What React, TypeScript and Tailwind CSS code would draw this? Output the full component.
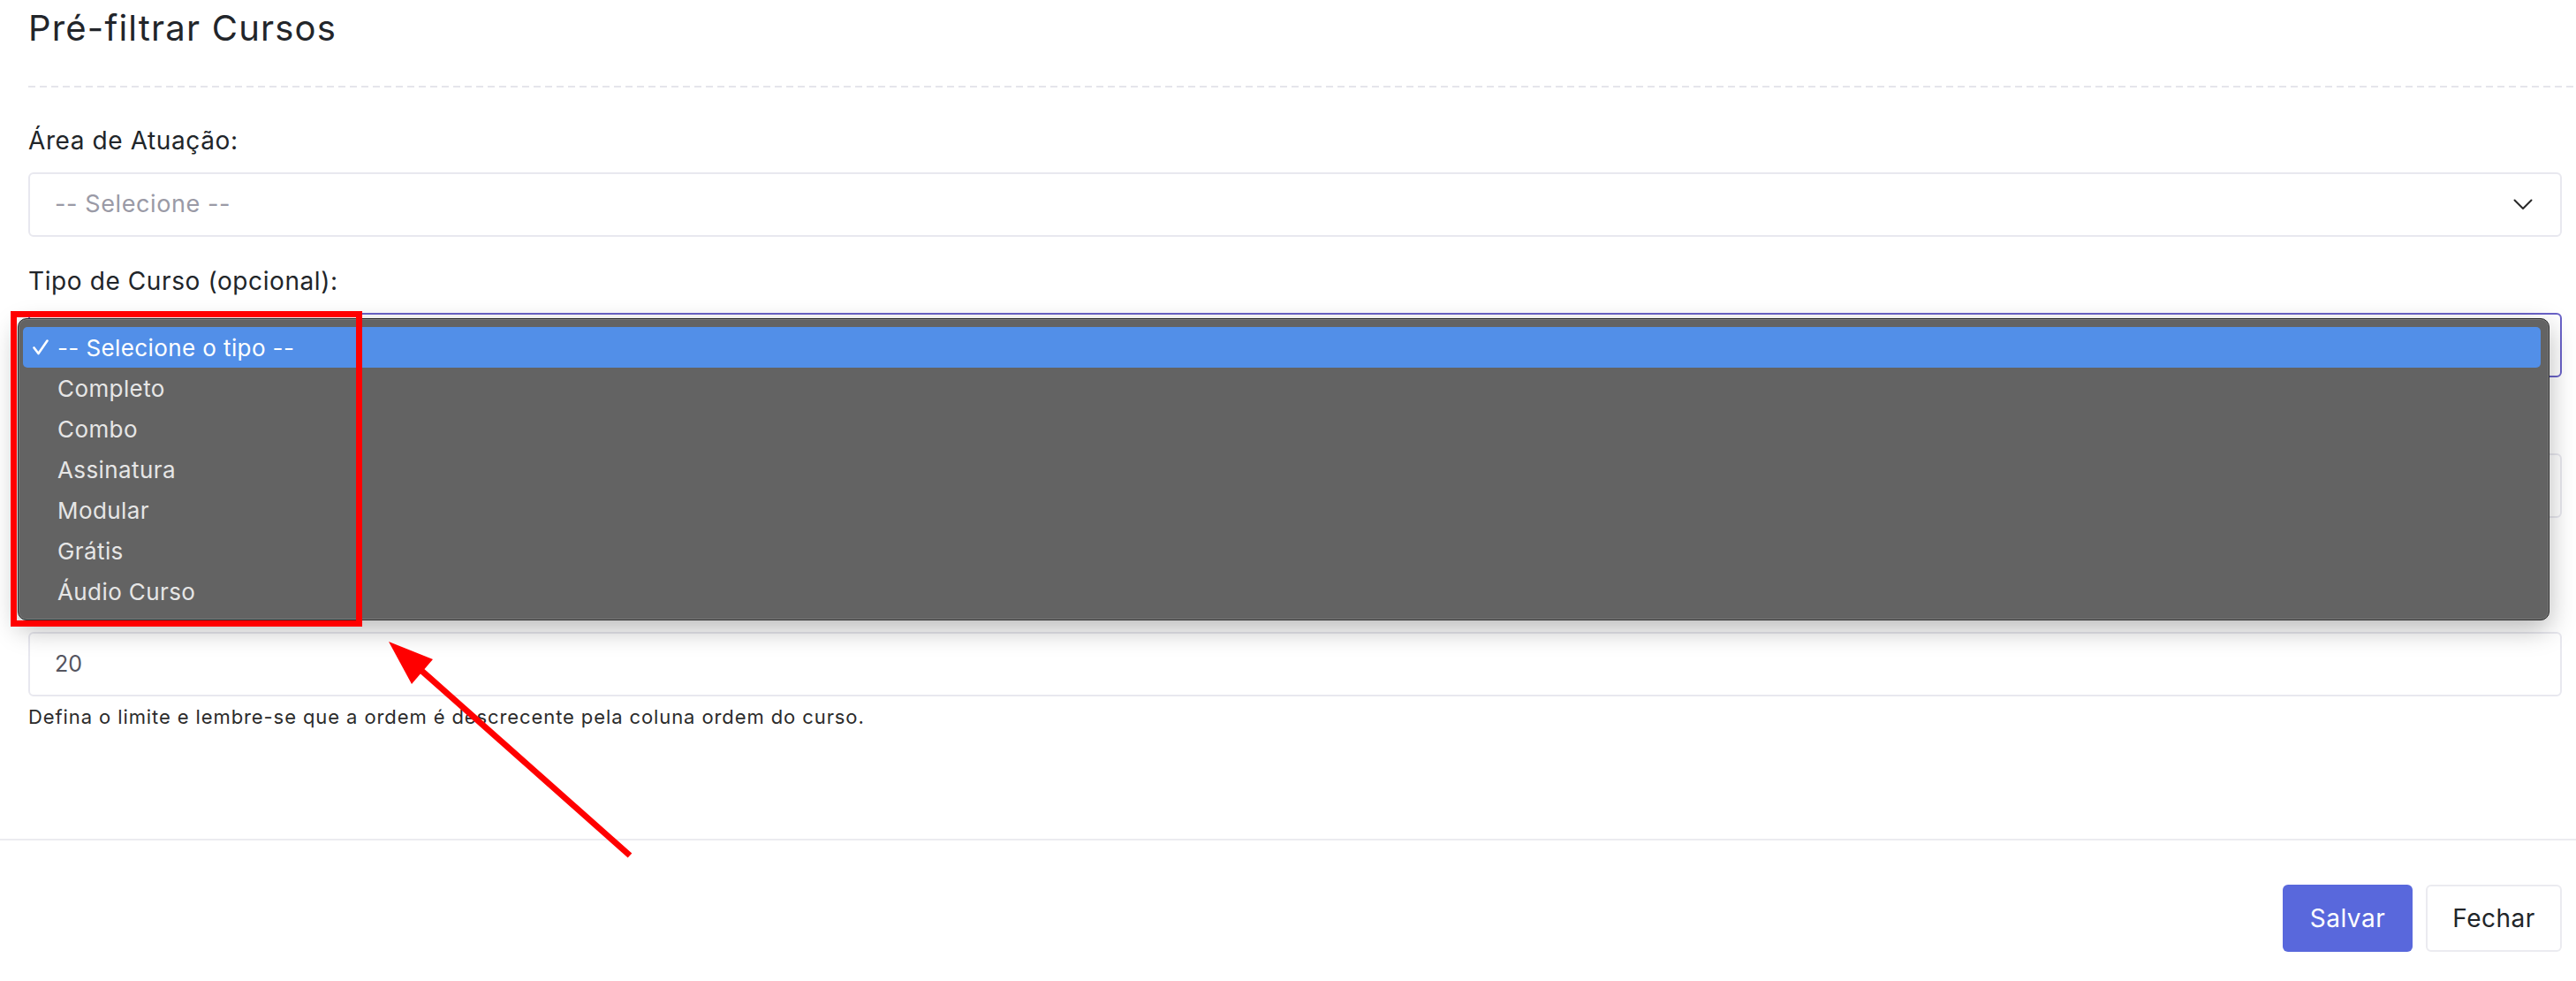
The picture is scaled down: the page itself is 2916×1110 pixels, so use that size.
import React from "react";

const Chevron = ({ className = "" }: { className?: string }) => (
  <svg className={className} width="22" height="13" viewBox="0 0 22 13" fill="none">
    <path d="M1.5 1.5 L11 11 L20.5 1.5" stroke="#2a2a2a" strokeWidth="2" strokeLinecap="round" strokeLinejoin="round" />
  </svg>
);

const Check = () => (
  <svg width="18" height="18" viewBox="0 0 18 18" fill="none" className="shrink-0">
    <path d="M1.5 9.5 L6.5 16 L16.5 1.5" stroke="#ffffff" strokeWidth="2.6" strokeLinecap="round" strokeLinejoin="round" />
  </svg>
);

const options = ["Completo", "Combo", "Assinatura", "Modular", "Grátis", "Áudio Curso"];

export default function App() {
  return (
    <div className="relative flex h-[1110px] w-full flex-col overflow-hidden bg-white font-['Inter',sans-serif] text-[#212529]">
      <header className="h-[97px] pl-[32px] pt-[8px]">
        <h1 className="h-[48px] text-[40px] font-normal leading-[48px] tracking-[1.2px] text-[#22252a]">Pré-filtrar Cursos</h1>
      </header>
      <div className="ml-[32px] h-[2px] shrink-0 bg-[repeating-linear-gradient(to_right,#e5e5eb_0px,#e5e5eb_8px,transparent_8px,transparent_13px)]" />

      <main className="flex-1 pl-[32px] pr-[16px] pt-[42px]">
        {/* Área de Atuação */}
        <div className="flex flex-col">
          <label className="mb-[18px] h-[36px] text-[28px] leading-[36px] tracking-[0.6px]">Área de Atuação:</label>
          <div className="flex h-[73px] items-center justify-between rounded-[6px] border-2 border-[#e8e8ef] bg-white pl-[28px] pr-[31px]">
            <span className="text-[27px] tracking-[0.6px] text-[#9a9aa6]">-- Selecione --</span>
            <Chevron />
          </div>
        </div>

        {/* Tipo de Curso (its value is covered by the open popup) */}
        <div className="mt-[32px] flex flex-col">
          <label className="mb-[18px] h-[36px] text-[28px] leading-[36px] tracking-[0.6px]">Tipo de Curso (opcional):</label>
          <div className="flex h-[73px] items-center justify-end rounded-[6px] border-2 border-[#6a63c8] bg-white pl-[28px] pr-[31px]">
            <Chevron />
          </div>
        </div>

        {/* Field hidden under the popup */}
        <div className="mt-[32px] flex flex-col">
          <div className="mb-[18px] h-[36px]" />
          <div className="flex h-[73px] items-center justify-end rounded-[6px] border-2 border-[#e8e8ef] bg-white pl-[28px] pr-[31px]">
            <Chevron />
          </div>
          <div className="mt-[8px] h-[35px]" />
        </div>

        {/* Limite */}
        <div className="mt-[32px] flex flex-col">
          <div className="mb-[18px] h-[36px]" />
          <div className="flex h-[73px] items-center rounded-[6px] border-2 border-[#e8e8ef] bg-white pl-[28px]">
            <span className="text-[25px] text-[#55555f]">20</span>
          </div>
          <p className="mt-[8px] h-[30px] text-[22px] leading-[30px] tracking-[0.9px] text-[#2b2b2b]">
            Defina o limite e lembre-se que a ordem é descrecente pela coluna ordem do curso.
          </p>
        </div>
      </main>

      <footer className="flex h-[161px] shrink-0 items-start justify-end gap-[15px] border-t-2 border-[#ebebf0] pr-[16px] pt-[50px]">
        <button className="flex h-[76px] w-[147px] items-center justify-center rounded-[6px] bg-[#5968dc] text-[28px] tracking-[0.5px] text-white">
          Salvar
        </button>
        <button className="flex h-[76px] w-[154px] items-center justify-center rounded-[6px] border-2 border-[#ebebf0] bg-white text-[28px] tracking-[0.5px] text-[#212529]">
          Fechar
        </button>
      </footer>

      {/* Native select popup */}
      <div className="absolute left-[20px] top-[360px] h-[342px] w-[2866px] rounded-[10px] border border-[#2c2c2c] bg-[#636363] pb-[9px] pl-[5px] pr-[9px] pt-[9px] shadow-[0_10px_30px_rgba(0,0,0,0.28),inset_0_0_0_1px_rgba(255,255,255,0.14)]">
        <div className="flex h-[46px] items-center rounded-[5px] bg-[#528fe8] pl-[11px] text-[26px] tracking-[0.4px] text-white">
          <Check />
          <span className="ml-[10px]">-- Selecione o tipo --</span>
        </div>
        {options.map((o) => (
          <div key={o} className="flex h-[46px] items-center pl-[39px] text-[26px] tracking-[0.4px] text-[#e6e6e6]">
            {o}
          </div>
        ))}
      </div>

      {/* Red annotation box */}
      <div className="pointer-events-none absolute left-[12px] top-[352px] h-[357px] w-[398px] border-[7px] border-[#ff0000]" />

      {/* Red arrow */}
      <svg className="pointer-events-none absolute left-0 top-0" width="2916" height="1110" viewBox="0 0 2916 1110">
        <line x1="713" y1="968" x2="474" y2="756" stroke="#ff0000" strokeWidth="7" />
        <polygon points="440,726 490,746 466,774" fill="#ff0000" />
      </svg>
    </div>
  );
}
